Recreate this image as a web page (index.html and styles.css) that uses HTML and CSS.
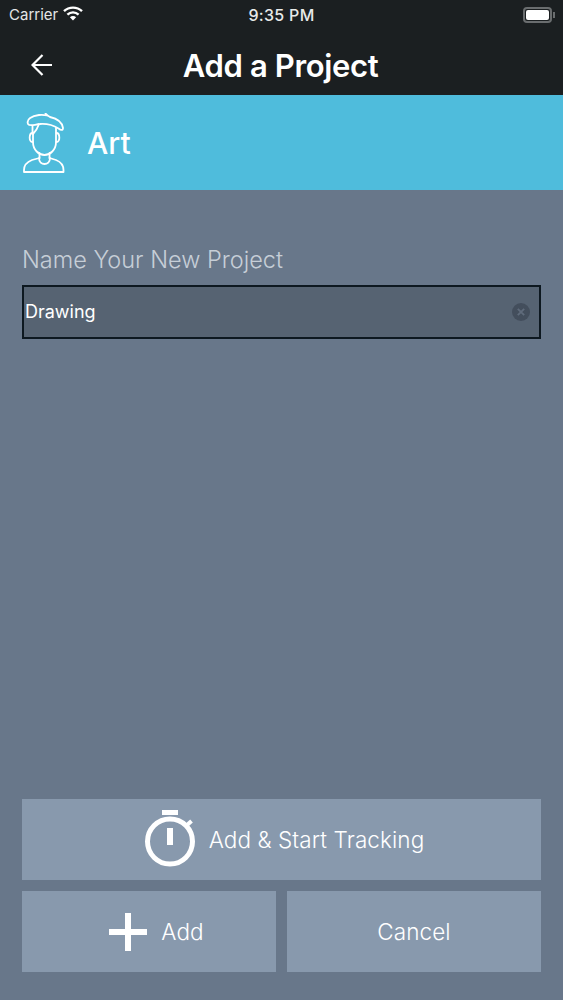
FILE: index.html
```html
<!DOCTYPE html>
<html lang="en">
<head>
    <meta charset="UTF-8">
    <meta name="viewport" content="width=device-width, initial-scale=1.0">
    <title>Add a Project</title>
    <link rel="stylesheet" href="styles.css">
</head>
<body>
    <div class="page">
        <div class="header">
            <div class="status-bar">
                <div class="status-left">
                    <span>Carrier</span>
                    <svg class="wifi" width="20" height="15" viewBox="0 0 20 15">
                        <path d="M1 5.2 A13 13 0 0 1 19 5.2" fill="none" stroke="#fff" stroke-width="2.4"/>
                        <path d="M4.4 8.6 A8.2 8.2 0 0 1 15.6 8.6" fill="none" stroke="#fff" stroke-width="2.4"/>
                        <path d="M10 14.5 L6.9 11.3 A4.4 4.4 0 0 1 13.1 11.3 Z" fill="#fff"/>
                    </svg>
                </div>
                <span class="status-time">9:35 PM</span>
                <div class="battery"><div class="battery-fill"></div></div>
            </div>
            <div class="nav-bar">
                <svg class="back" width="21" height="22" viewBox="0 0 21 22">
                    <path d="M21 11 H1.500 M11.500 1 L1.500 11 L11.500 21" fill="none" stroke="#fff" stroke-width="2.200"/>
                </svg>
                <h1>Add a Project</h1>
            </div>
        </div>

        <div class="category">
            <svg class="avatar" width="42" height="60" viewBox="0 0 42 60" fill="none" stroke="#fff" stroke-width="1.800" stroke-linecap="round" stroke-linejoin="round">
                <path d="M5 11 C3 6 9 3 16 2 C20 1.500 22 2 24 2.500 L22.500 0.500 C24 2 25 3 27 4 C34 5.500 39 9 40 15 C40 18 37.500 17 35.500 15.500 C30 12 24 10.500 17 11 C12 11.200 7 14 5 11 Z"/>
                <path d="M10 20 V29 C10 37 16 42 21.500 42 C27 42 33 37 33 29 V15"/>
                <path d="M10 21 C13 18 15 14 16 11 M9.500 13 L9.500 20"/>
                <path d="M9.500 20 C6 20 5.500 29 9.500 29 M33.500 20 C37 20 37.500 29 33.500 29"/>
                <path d="M16.500 40 V45 M26.500 40 V45 M16 45 C16 53 27 53 27 45"/>
                <path d="M16.500 45 L9 47 C4 49 1 52 1 57 V59 H40.500 V57 C40.500 52 38 49 33 47 L26.500 45"/>
            </svg>
            <span class="category-name">Art</span>
        </div>

        <div class="content">
            <label class="field-label">Name Your New Project</label>
            <div class="field">
                <span class="field-value">Drawing</span>
                <svg class="clear" width="18" height="18" viewBox="0 0 18 18">
                    <circle cx="9" cy="9" r="9" fill="#434e5c"/>
                    <path d="M5.800 5.800 L12.200 12.200 M12.200 5.800 L5.800 12.200" stroke="#5f6b7b" stroke-width="1.800"/>
                </svg>
            </div>

            <div class="actions">
                <button type="button" class="button button-track">
                    <svg class="watch" width="50" height="57" viewBox="0 0 50 57" fill="none" stroke="#fff">
                        <path d="M17 2.500 H33" stroke-width="5"/>
                        <circle cx="25" cy="31.500" r="22.500" stroke-width="5"/>
                        <path d="M25 18 V35" stroke-width="6"/>
                        <path d="M41 16 L46.500 11" stroke-width="4"/>
                    </svg>
                    Add &amp; Start Tracking
                </button>
                <div class="button-row">
                    <button type="button" class="button button-add">
                        <svg width="38" height="38" viewBox="0 0 38 38">
                            <path d="M19 0 V38 M0 19 H38" stroke="#fff" stroke-width="6"/>
                        </svg>
                        Add
                    </button>
                    <button type="button" class="button">Cancel</button>
                </div>
            </div>
        </div>
    </div>
</body>
</html>
```
FILE: styles.css
```css
body {
    margin: 0;
    font-family: Inter, "Noto Sans", sans-serif;
    color: white;
    background: #68778a;
}
.page {
    display: flex;
    flex-direction: column;
    height: 1000px;
}
.header {
    height: 95px;
    background: #1b1f21;
}
.status-bar {
    display: flex;
    align-items: center;
    justify-content: space-between;
    height: 29px;
    padding: 0 11px 0 9px;
    font-size: 15px;
    position: relative;
}
.status-left {
    display: flex;
    align-items: center;
    gap: 5px;
    color: #e4e6e7;
}
.wifi {
    margin-top: -3px;
}
.status-time {
    position: absolute;
    left: 0;
    right: 0;
    text-align: center;
    font-size: 16px;
    font-weight: 500;
    letter-spacing: 0.3px;
    color: #e8eaea;
}
.battery {
    width: 29px;
    height: 16px;
    box-sizing: border-box;
    border: 2px solid #6a6d6f;
    border-radius: 4px;
    padding: 1px;
    position: relative;
}
.battery::after {
    content: "";
    position: absolute;
    top: 3px;
    right: -5px;
    width: 2px;
    height: 6px;
    background: #6a6d6f;
}
.battery-fill {
    height: 100%;
    background: white;
    border-radius: 2px;
}
.nav-bar {
    display: flex;
    align-items: center;
    justify-content: center;
    height: 74px;
    margin-top: -1px;
    padding-right: 2px;
    position: relative;
}
.back {
    position: absolute;
    left: 31px;
}
.nav-bar h1 {
    margin: 0;
    font-size: 31px;
    font-weight: 600;
    letter-spacing: -0.35px;
}
.category {
    display: flex;
    align-items: center;
    gap: 22px;
    height: 95px;
    padding-left: 23px;
    background: #4fbcdc;
}
.category-name {
    font-size: 30px;
    font-weight: 500;
}
.content {
    flex: 1;
    display: flex;
    flex-direction: column;
    padding: 55px 22px 28px;
}
.field-label {
    font-size: 23.500px;
    line-height: 30px;
    font-weight: 300;
    color: #c6ced7;
}
.field {
    display: flex;
    align-items: center;
    justify-content: space-between;
    height: 54px;
    box-sizing: border-box;
    margin-top: 10px;
    padding: 0 9px 0 1px;
    border: 2px solid #0d1820;
    background: #566372;
}
.field-value {
    font-size: 18px;
    margin-top: -2px;
}
.actions {
    margin-top: auto;
    display: flex;
    flex-direction: column;
    gap: 11px;
}
.button-row {
    display: grid;
    grid-template-columns: 1fr 1fr;
    gap: 11px;
}
.button {
    box-sizing: border-box;
    display: flex;
    align-items: center;
    justify-content: center;
    gap: 14px;
    height: 81px;
    padding: 0;
    border: none;
    background: #8899ad;
    color: white;
    font-family: inherit;
    font-size: 22.500px;
    font-weight: 300;
    letter-spacing: 0.1px;
    cursor: pointer;
}
.button-track {
    padding-left: 6px;
}
.button-add {
    padding-left: 15px;
}
.watch {
    margin-top: -2px;
}
```
